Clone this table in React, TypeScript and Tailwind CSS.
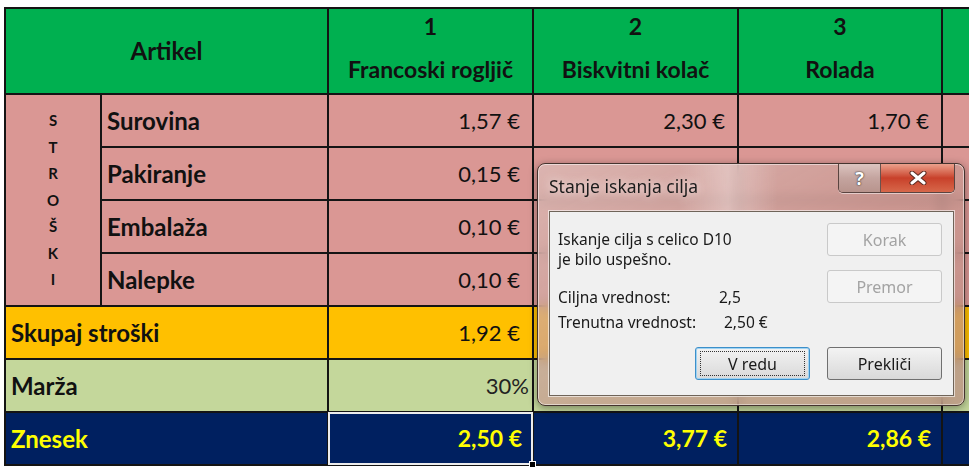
import React from 'react';

const cell = 'flex items-center';
const pink = 'bg-[#da9794]';

const costRows = [
  { label: 'Surovina', values: ['1,57 €', '2,30 €', '1,70 €'] },
  { label: 'Pakiranje', values: ['0,15 €', '', ''] },
  { label: 'Embalaža', values: ['0,10 €', '', ''] },
  { label: 'Nalepke', values: ['0,10 €', '', ''] },
];

const headers = [
  { num: '1', name: 'Francoski rogljič' },
  { num: '2', name: 'Biskvitni kolač' },
  { num: '3', name: 'Rolada' },
  { num: '', name: '' },
];

const DialogButton = ({ label, disabled, focused }: { label: string; disabled?: boolean; focused?: boolean }) => (
  <div
    className={
      'w-[115px] h-[33px] rounded-[3px] border flex items-center justify-center text-[16px] ' +
      (disabled
        ? 'border-[#c9c9c9] bg-[#f4f4f4] text-[#a3a3a3]'
        : focused
        ? 'border-[#3d8fc9] bg-gradient-to-b from-[#f3f3f3] to-[#d9d9d9] text-[#1a1a1a] shadow-[inset_0_0_0_1px_#9fd3f3]'
        : 'border-[#707070] bg-gradient-to-b from-[#f3f3f3] to-[#d9d9d9] text-[#1a1a1a]')
    }
  >
    {focused ? (
      <div className="w-[105px] h-[25px] border border-dotted border-[#333] flex items-center justify-center">{label}</div>
    ) : (
      label
    )}
  </div>
);

const GoalSeekDialog = () => (
  <div className="absolute left-[537px] top-[163px] w-[428px] h-[243px] rounded-[8px] border border-[#45342f] bg-[rgba(196,146,138,0.68)] backdrop-blur-[6px] shadow-[0_2px_8px_rgba(0,0,0,0.4),inset_0_0_0_1px_rgba(255,255,255,0.5)] font-['Noto_Sans',sans-serif]">
    {/* glass glare */}
    <div className="absolute inset-0 rounded-[8px] bg-gradient-to-br from-[rgba(255,255,255,0.3)] via-[rgba(255,255,255,0.04)] to-[rgba(120,90,60,0.1)]" />
    <div className="absolute left-[140px] top-[1px] w-[100px] h-[45px] bg-gradient-to-r from-transparent via-[rgba(255,255,255,0.3)] to-transparent" />

    {/* title */}
    <div className="absolute left-[11px] top-[10px] text-[17.5px] leading-[24px] text-[#1c1c1c] [text-shadow:0_0_8px_rgba(255,255,255,0.9)]">
      Stanje iskanja cilja
    </div>

    {/* caption buttons */}
    <div className="absolute left-[300px] top-[0px] flex h-[29px] rounded-b-[5px] border border-t-0 border-[#5a4440] overflow-hidden shadow-[0_1px_0_rgba(255,255,255,0.5)]">
      <div className="w-[42px] h-full bg-gradient-to-b from-[#dcc4c0] via-[#c4a49f] to-[#b8948d] border-r border-[#6b524d] flex items-center justify-center">
        <span className="text-white font-bold text-[18px] leading-none [text-shadow:0_0_1px_#333,0_0_2px_#333]">?</span>
      </div>
      <div className="w-[73px] h-full bg-gradient-to-b from-[#eaa08c] via-[#c8402a] to-[#d7674a] flex items-center justify-center">
        <svg width="18" height="14" viewBox="0 0 18 14">
          <path d="M3 2 L15 12 M15 2 L3 12" stroke="#5a2a20" strokeWidth="5" strokeLinecap="round" />
          <path d="M3 2 L15 12 M15 2 L3 12" stroke="#ffffff" strokeWidth="3" strokeLinecap="round" />
        </svg>
      </div>
    </div>

    {/* client area */}
    <div className="absolute left-[11px] top-[47px] w-[405px] h-[185px] bg-[#f0f0f0] border border-[#6f6459] shadow-[0_0_0_1px_rgba(255,255,255,0.6)] pl-[8px] pr-[11px] pt-[11px] text-[15.5px] text-[#1a1a1a]">
      <div className="flex justify-between">
        <div className="pt-[6px] leading-[20px]">
          <div>Iskanje cilja s celico D10</div>
          <div>je bilo uspešno.</div>
          <div className="mt-[18px]">
            <span className="inline-block w-[161px]">Ciljna vrednost:</span>2,5
          </div>
          <div className="mt-[5px]">
            <span className="inline-block w-[166px]">Trenutna vrednost:</span>2,50 €
          </div>
        </div>
        <div className="flex flex-col gap-[14px]">
          <DialogButton label="Korak" disabled />
          <DialogButton label="Premor" disabled />
        </div>
      </div>
      <div className="mt-[15px] flex justify-end gap-[17px]">
        <DialogButton label="V redu" focused />
        <DialogButton label="Prekliči" />
      </div>
    </div>
  </div>
);

export default function App() {
  return (
    <div className="relative w-[969px] h-[471px] overflow-hidden bg-white font-['Lato',sans-serif]">
      <div className="ml-[4px] mt-[7px] w-max grid grid-cols-[94px_225px_203px_203px_202px_200px] grid-rows-[84px_repeat(7,51px)] gap-[2px] bg-[#141414] p-[2px] text-[#111]">
        {/* header */}
        <div className={`${cell} col-span-2 justify-center bg-[#00b050] font-bold text-[24px]`}>Artikel</div>
        {headers.map((h, i) => (
          <div key={i} className="bg-[#00b050] flex flex-col items-center pt-[3px] font-bold text-[23px] leading-[28px]">
            <div>{h.num}</div>
            <div className="mt-[15px]">{h.name}</div>
          </div>
        ))}

        {/* stroški */}
        {costRows.map((r, i) => (
          <React.Fragment key={r.label}>
            {i === 0 && (
              <div className={`${pink} row-span-4 flex flex-col items-center justify-center font-bold text-[15px] leading-[26.5px]`}>
                {['S', 'T', 'R', 'O', 'Š', 'K', 'I'].map((c) => (
                  <div key={c}>{c}</div>
                ))}
              </div>
            )}
            <div className={`${cell} ${pink} pl-[5px] font-bold text-[24px]`}>{r.label}</div>
            {r.values.map((v, j) => (
              <div key={j} className={`${cell} ${pink} justify-end pr-[12px] text-[22px]`}>{v}</div>
            ))}
            <div className={pink} />
          </React.Fragment>
        ))}

        {/* skupaj */}
        <div className={`${cell} col-span-2 bg-[#ffc000] pl-[5px] font-bold text-[24px]`}>Skupaj stroški</div>
        <div className={`${cell} bg-[#ffc000] justify-end pr-[12px] text-[22px]`}>1,92 €</div>
        <div className="bg-[#ffc000]" />
        <div className="bg-[#ffc000]" />
        <div className="bg-[#ffc000]" />

        {/* marža */}
        <div className={`${cell} col-span-2 bg-[#c4d79b] pl-[5px] font-bold text-[24px]`}>Marža</div>
        <div className={`${cell} bg-[#c4d79b] justify-end pr-[3px] text-[22px] text-[#222]`}>30%</div>
        <div className="bg-[#c4d79b]" />
        <div className="bg-[#c4d79b]" />
        <div className="bg-[#c4d79b]" />

        {/* znesek */}
        <div className={`${cell} col-span-2 bg-[#002060] pl-[5px] font-bold text-[24px] text-[#ffff00]`}>Znesek</div>
        <div className={`${cell} relative bg-[#002060] justify-end pr-[10px] font-bold text-[23px] text-[#ffff00] outline outline-[2px] outline-[#ececec] -outline-offset-[1px]`}>
          2,50 €
          <div className="absolute right-[-4px] bottom-[-4px] w-[7px] h-[7px] bg-black border border-white" />
        </div>
        <div className={`${cell} bg-[#002060] justify-end pr-[10px] font-bold text-[23px] text-[#ffff00]`}>3,77 €</div>
        <div className={`${cell} bg-[#002060] justify-end pr-[10px] font-bold text-[23px] text-[#ffff00]`}>2,86 €</div>
        <div className="bg-[#002060]" />
      </div>

      <GoalSeekDialog />
    </div>
  );
}
